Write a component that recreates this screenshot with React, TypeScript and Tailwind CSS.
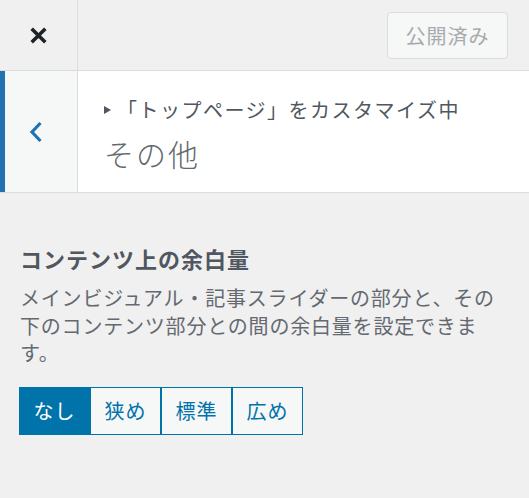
import React from "react";

const jp = { fontFamily: '"Noto Sans CJK JP", "Noto Sans", sans-serif' };

const options = ["なし", "狭め", "標準", "広め"];

function CloseIcon() {
  return (
    <svg width="21" height="21" viewBox="0 0 20 20" className="text-[#1d2327]">
      <path d="M3.5 3.5 L16.5 16.5 M16.5 3.5 L3.5 16.5" stroke="currentColor" strokeWidth="3.4" strokeLinecap="butt" />
    </svg>
  );
}

function BackIcon() {
  return (
    <svg width="16" height="24" viewBox="0 0 16 24" className="text-[#2271b1]">
      <path d="M12.5 3 L4 12 L12.5 21" fill="none" stroke="currentColor" strokeWidth="3.2" />
    </svg>
  );
}

export default function App() {
  const [selected, setSelected] = React.useState(0);

  return (
    <div className="w-[529px] h-[498px] bg-[#f0f0f1] overflow-hidden" style={jp}>
      {/* Top bar */}
      <div className="flex h-[71px] border-b border-[#dcdcde]">
        <div className="w-[78px] flex items-center justify-center border-r border-[#dcdcde]">
          <CloseIcon />
        </div>
        <div className="flex-1 flex items-start justify-end pt-[12px] pr-[21px]">
          <button className="w-[121px] h-[47px] rounded-[4px] border border-[#dcdcde] bg-[#f6f7f7] text-[#a7aaad] text-[20px] tracking-[1px]">
            公開済み
          </button>
        </div>
      </div>

      {/* Section header */}
      <div className="flex h-[122px] bg-white border-b border-[#dcdcde]">
        <div className="w-[5px] bg-[#2271b1]" />
        <div className="w-[73px] bg-[#f6f7f7] border-r border-[#dcdcde] flex items-center pl-[23px]">
          <BackIcon />
        </div>
        <div className="flex-1 pl-[26px] pt-[25px]">
          <div className="flex items-center h-[28px] text-[#50575e] text-[20px] tracking-[1.5px] leading-[28px]">
            <span className="inline-block w-0 h-0 border-y-[4px] border-y-transparent border-l-[7px] border-l-[#50575e] mr-[6px]" />
            <span>「トップページ」をカスタマイズ中</span>
          </div>
          <div className="mt-[9px] text-[30px] leading-[40px] font-light text-[#646970] tracking-[2px]">
            その他
          </div>
        </div>
      </div>

      {/* Control */}
      <div className="px-[20px] pt-[50px]">
        <h3 className="text-[22px] leading-[30px] font-bold text-[#50575e] tracking-[1px]">
          コンテンツ上の余白量
        </h3>
        <p className="mt-[11px] pr-[2px] text-[20px] leading-[27.5px] text-[#646970] tracking-[0.8px]">
          メインビジュアル・記事スライダーの部分と、その下のコンテンツ部分との間の余白量を設定できます。
        </p>
        <div className="mt-[20px] -ml-[1px] flex">
          {options.map((label, i) => (
            <button
              key={label}
              onClick={() => setSelected(i)}
              className={
                i === selected
                  ? "w-[71px] h-[48px] border border-[#0073aa] bg-[#0073aa] text-white text-[20px] tracking-[1px]"
                  : "w-[71px] h-[48px] border border-[#0073aa] bg-[#f6f7f7] text-[#0073aa] text-[20px] tracking-[1px]"
              }
            >
              {label}
            </button>
          ))}
        </div>
      </div>
    </div>
  );
}
